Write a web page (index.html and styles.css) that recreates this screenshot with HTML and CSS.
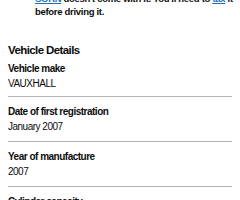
FILE: index.html
```html
<!DOCTYPE html>
<html lang="en">
<head>
    <meta charset="UTF-8">
    <meta name="viewport" content="width=device-width, initial-scale=1.0">
    <title>Vehicle Details</title>
    <link rel="stylesheet" href="styles.css">
</head>
<body>
    <div class="page">
        <div class="warning">
            <strong class="warning-text">
                <a href="#" class="link">SORN</a> doesn't come with it. You'll need to <a href="#" class="link">tax</a> it<br>
                before driving it.
            </strong>
        </div>

        <h2 class="heading">Vehicle Details</h2>

        <dl class="summary">
            <div class="summary-row">
                <dt class="summary-key">Vehicle make</dt>
                <dd class="summary-value">VAUXHALL</dd>
            </div>
            <div class="summary-row">
                <dt class="summary-key">Date of first registration</dt>
                <dd class="summary-value">January 2007</dd>
            </div>
            <div class="summary-row">
                <dt class="summary-key">Year of manufacture</dt>
                <dd class="summary-value">2007</dd>
            </div>
            <div class="summary-row">
                <dt class="summary-key">Cylinder capacity</dt>
                <dd class="summary-value">1598cc</dd>
            </div>
        </dl>
    </div>
</body>
</html>
```

FILE: styles.css
```css
body {
    margin: 0;
    background-color: #ffffff;
    color: #0b0c0c;
    font-family: 'Liberation Sans', Arial, sans-serif;
    overflow: hidden;
}

.page {
    padding: 0 8px;
}

.warning {
    margin-top: -8px;
    padding-left: 27px;
}

.warning-text {
    display: block;
    font-size: 9.5px;
    line-height: 13px;
    letter-spacing: -0.3px;
    white-space: nowrap;
}

.link {
    color: #1d70b8;
    text-decoration: underline;
}

.heading {
    margin: 25px 0 0;
    font-size: 11.5px;
    line-height: 14px;
    letter-spacing: -0.6px;
    font-weight: bold;
}

.summary {
    margin: 0;
}

.summary-row {
    padding: 8px 0 7px;
    border-bottom: 1px solid #b1b4b6;
}

.summary-row:first-child {
    padding: 5px 0 5px;
}

.summary-key {
    font-size: 10px;
    line-height: 14px;
    font-weight: bold;
    letter-spacing: -0.5px;
    margin-bottom: 1px;
}

.summary-value {
    margin: 0;
    font-size: 10px;
    line-height: 14px;
    letter-spacing: -0.5px;
}
```
